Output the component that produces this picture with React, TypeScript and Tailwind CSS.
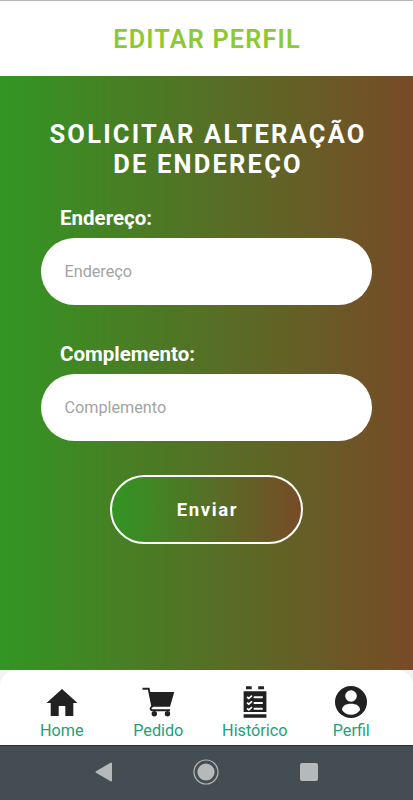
import { useState } from "react";

type FieldProps = {
  label: string;
  value: string;
  onChange: (value: string) => void;
  className?: string;
};

const Field = ({ label, value, onChange, className }: FieldProps) => {
  return (
    <label className={`block ${className ?? ""}`}>
      <span className="block pl-[19px] text-[20.5px] leading-6 font-bold text-white">
        {label}:
      </span>
      <input
        type="text"
        value={value}
        placeholder={label}
        onChange={(e) => onChange(e.target.value)}
        className="mt-2 block h-[67px] w-full rounded-full bg-white px-[23.5px] text-[16.2px] text-black outline-none placeholder:text-[#a3a3a3]"
      />
    </label>
  );
};

const HomeIcon = () => (
  <svg width="32" height="32" viewBox="0 0 32 32" fill="#212121">
    <path d="M16 3 L31.5 17 H27.3 V30 H19.3 V20 H12.7 V30 H4.7 V17 H0.5 Z" />
  </svg>
);

const CartIcon = () => (
  <svg width="34" height="32" viewBox="0 0 34 32" fill="#212121">
    <path d="M8.2 6 H33.3 L29 20.8 H11.3 Z" />
    <path
      d="M1.5 2.8 H7.7 L11.3 20.5 C9 21.5 9 24.2 11.5 24.2 H29"
      fill="none"
      stroke="#212121"
      strokeWidth="1.9"
    />
    <circle cx="13.3" cy="27.7" r="2.7" />
    <circle cx="26.5" cy="27.7" r="2.7" />
  </svg>
);

const HistoryIcon = () => (
  <svg width="24" height="32" viewBox="0 0 24 32" fill="#212121">
    <path d="M3 0.3 H8.7 V3.2 H3 Z M15.2 0.3 H21 V3.2 H15.2 Z M0.6 5.3 H23.4 V26 H0.6 Z M0.6 28.2 H23.4 V31.8 H0.6 Z" />
    <path
      d="M4 11 L5.8 12.5 L9 9.7 M4 16.7 L5.8 18.2 L9 15.4 M4 22.4 L5.8 23.9 L9 21.1"
      fill="none"
      stroke="#fff"
      strokeWidth="1.7"
    />
    <path
      d="M11.5 11.3 H19 M11.5 17 H19 M11.5 22.7 H19"
      stroke="#fff"
      strokeWidth="2"
      strokeLinecap="round"
    />
  </svg>
);

const ProfileIcon = () => (
  <svg width="32" height="32" viewBox="0 0 32 32">
    <circle cx="16" cy="16" r="16" fill="#212121" />
    <circle cx="16" cy="10" r="5.8" fill="#fff" />
    <path
      d="M7 24 C7 19.8 11 17.8 16 17.8 S25 19.8 25 24 C23 27 20 28.7 16 28.7 S9 27 7 24 Z"
      fill="#fff"
    />
  </svg>
);

const tabs = [
  { name: "Home", icon: <HomeIcon /> },
  { name: "Pedido", icon: <CartIcon /> },
  { name: "Histórico", icon: <HistoryIcon /> },
  { name: "Perfil", icon: <ProfileIcon /> },
];

const App = () => {
  const [endereco, setEndereco] = useState("");
  const [complemento, setComplemento] = useState("");

  return (
    <div className="flex h-[800px] w-[413px] flex-col overflow-hidden bg-white font-[Roboto,sans-serif]">
      <header className="flex h-[76px] shrink-0 items-center justify-center border-t border-[#b5b5b5] bg-white pt-[3px]">
        <h1 className="pl-px text-[25.2px] leading-8 font-semibold tracking-[1.2px] text-[#8cc932]">
          EDITAR PERFIL
        </h1>
      </header>

      <main className="h-[594px] shrink-0 bg-linear-to-r/srgb from-[#329623] to-[#784a27] px-[41px] pt-[43px]">
        <h2 className="pl-[3px] text-center text-[25.5px] leading-[30px] font-bold tracking-[2.2px] text-white">
          SOLICITAR ALTERAÇÃO
          <br />
          DE ENDEREÇO
        </h2>
        <Field
          label="Endereço"
          value={endereco}
          onChange={setEndereco}
          className="mt-[27px]"
        />
        <Field
          label="Complemento"
          value={complemento}
          onChange={setComplemento}
          className="mt-[37px]"
        />
        <button
          type="button"
          className="mx-auto mt-[34px] block h-[69px] w-[193px] rounded-full border-2 border-white bg-linear-to-r/srgb from-[#329623] to-[#784a27] bg-origin-border pt-[2px] pl-[2px] text-[18.5px] font-bold tracking-[1.6px] text-white"
        >
          Enviar
        </button>
      </main>

      <div className="h-[75px] shrink-0 bg-[#f3f3f3]">
        <nav className="flex h-full rounded-t-[16px] bg-white px-[13.5px] pt-4">
          {tabs.map((tab) => (
            <a
              key={tab.name}
              className="flex flex-1 flex-col items-center text-[16.2px] leading-5 text-[#23a077]"
            >
              {tab.icon}
              <span className="mt-[3px]">{tab.name}</span>
            </a>
          ))}
        </nav>
      </div>

      <footer className="flex h-[55px] shrink-0 items-center justify-center gap-[80.5px] border-t border-[#17343a] bg-[#444d52] pr-px pb-[2px]">
        <svg width="18" height="20" viewBox="0 0 18 20" fill="#b5b9ba">
          <path
            d="M1.5 10 L16 1.5 V18.5 Z"
            stroke="#b5b9ba"
            strokeWidth="2"
            strokeLinejoin="round"
          />
        </svg>
        <svg width="26" height="26" viewBox="0 0 26 26" fill="#b5b9ba">
          <circle cx="13" cy="13" r="8.6" />
          <circle
            cx="13"
            cy="13"
            r="12"
            fill="none"
            stroke="#b5b9ba"
            strokeWidth="1.2"
          />
        </svg>
        <div className="h-[18px] w-[18px] rounded-[2px] bg-[#b5b9ba]" />
      </footer>
    </div>
  );
};

export default App;
